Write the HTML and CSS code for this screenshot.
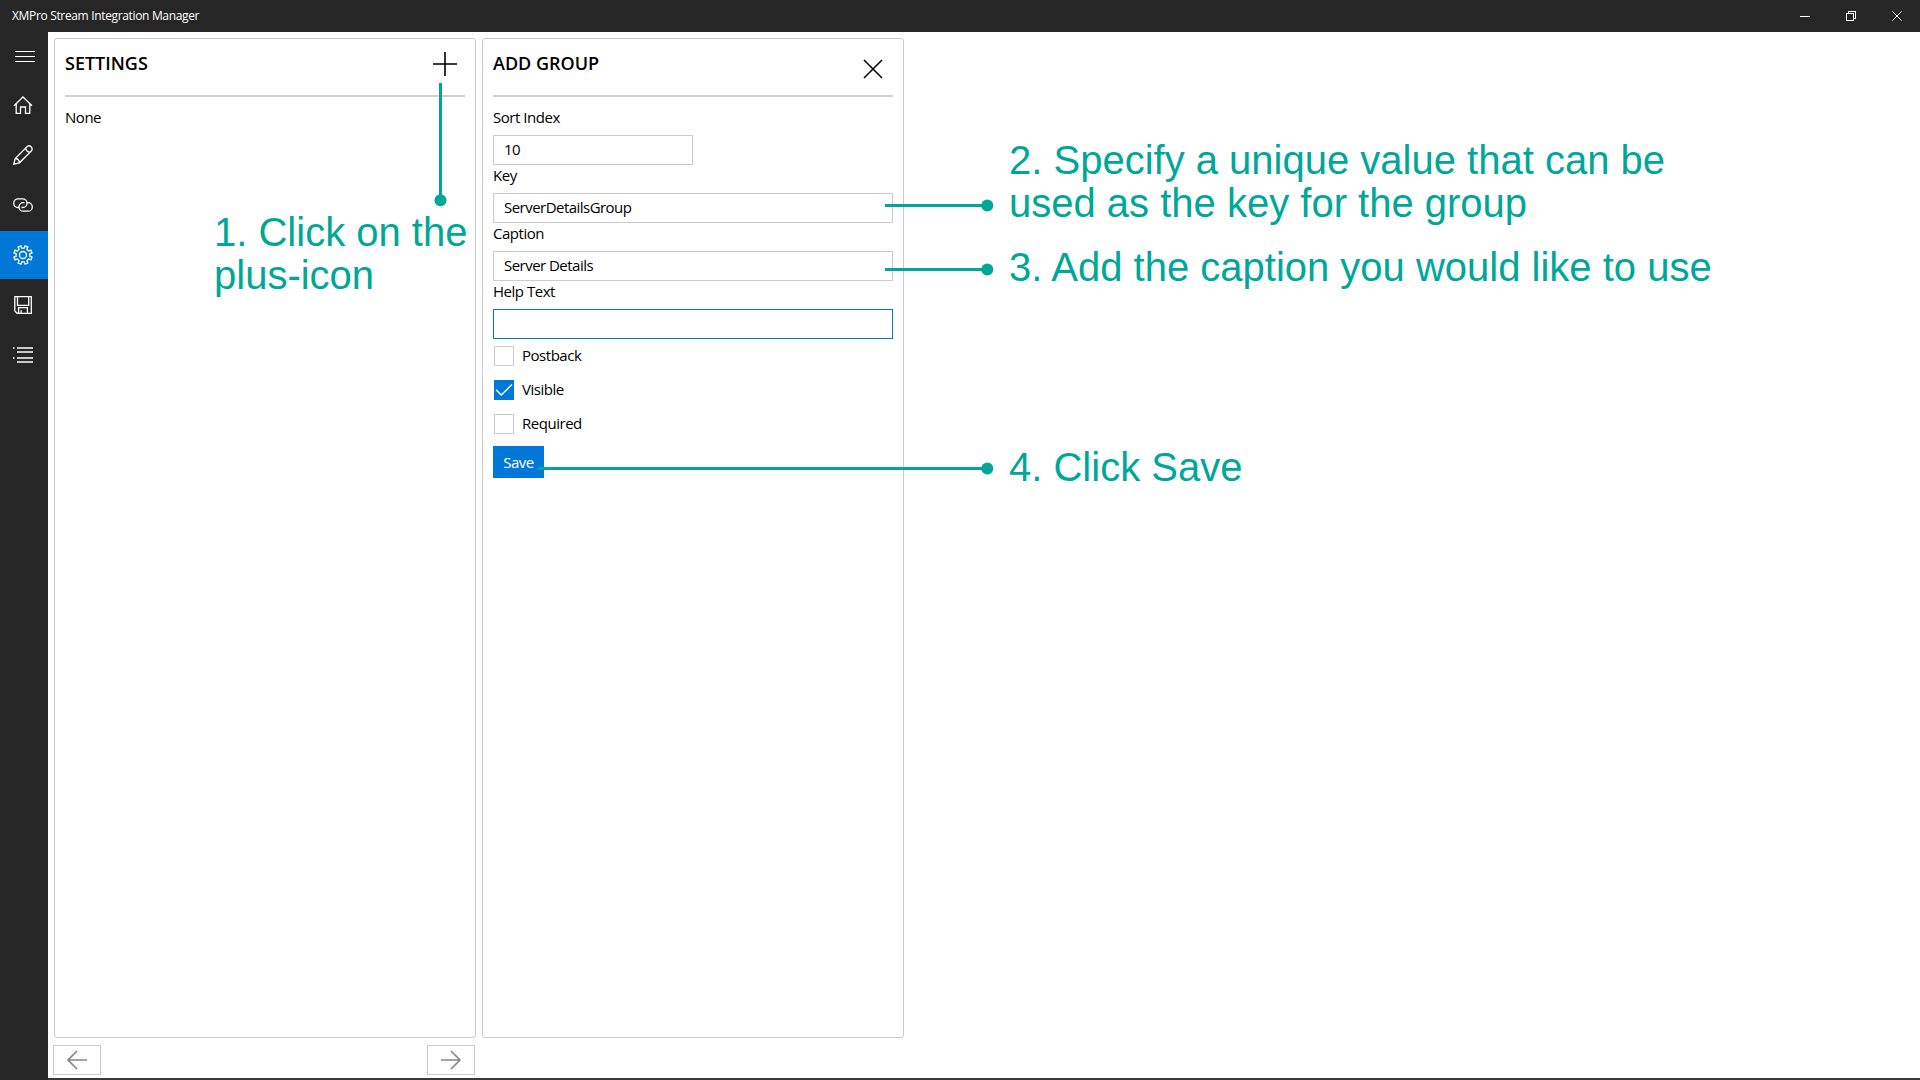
FILE: index.html
```html
<!DOCTYPE html>
<html lang="en">
<head>
<meta charset="utf-8">
<title>XMPro Stream Integration Manager</title>
<link rel="stylesheet" href="styles.css">
</head>
<body>
<div class="window">
  <header class="titlebar">
    <span class="titlebar-text">XMPro Stream Integration Manager</span>
    <div class="window-controls">
      <span class="control"><svg width="10" height="10" viewBox="0 0 10 10" shape-rendering="crispEdges"><path d="M0 5.5h10"/></svg></span>
      <span class="control"><svg width="10" height="10" viewBox="0 0 10 10" shape-rendering="crispEdges"><path d="M.5 2.5h7v7h-7zM2.5 2.5v-2h7v7h-2"/></svg></span>
      <span class="control"><svg width="10" height="10" viewBox="0 0 10 10"><path d="M.3.3l9.4 9.4M9.7.3L.3 9.7"/></svg></span>
    </div>
  </header>
  <div class="body">
    <nav class="sidebar">
      <a class="nav-item nav-menu"><svg width="20" height="12" viewBox="0 0 20 12" shape-rendering="crispEdges"><path d="M0 .5h20M0 5.5h20M0 10.5h20"/></svg></a>
      <a class="nav-item"><svg width="20" height="20" viewBox="0 0 20 20"><path d="M1 10.700L10 2l9 8.700M3.200 9v9.300h4.300v-6.300h5v6.300h4.300V9"/></svg></a>
      <a class="nav-item"><svg width="20" height="20" viewBox="0 0 20 20"><path d="M.8 19.200l1.400-5.700L14.500 1.300c2.500-1.700 5.600 1.400 4.200 4.200L6.500 17.800zM2.200 13.500c2.300 0 4.300 2 4.300 4.300M12.700 3.100c.4 2.400 1.800 3.800 4.200 4.200"/></svg></a>
      <a class="nav-item"><svg width="20" height="20" viewBox="0 0 20 20"><path d="M5.500 12.500H5A4.300 4.300 0 0 1 5 3.900h4.700a4.300 4.300 0 0 1 0 8.600H8.500M14.500 7.600h.5a4.300 4.300 0 0 1 0 8.600h-4.700a4.300 4.300 0 0 1 0-8.600h1.200"/></svg></a>
      <a class="nav-item nav-active"><svg width="20" height="20" viewBox="-10 -10 20 20"><circle r="3.500"/><path d="M-1.200-6.800L1.200-6.800 2.170-9.040 4.860-7.930 3.960-5.660 5.660-3.960 7.930-4.860 9.040-2.170 6.800-1.200 6.800 1.200 9.040 2.170 7.930 4.860 5.660 3.960 3.960 5.660 4.860 7.930 2.170 9.040 1.200 6.800-1.200 6.800-2.170 9.040-4.860 7.930-3.960 5.660-5.660 3.960-7.930 4.860-9.040 2.170-6.800 1.200-6.800-1.200-9.040-2.170-7.930-4.860-5.660-3.960-3.960-5.660-4.860-7.930-2.170-9.040z"/></svg></a>
      <a class="nav-item"><svg width="20" height="20" viewBox="0 0 20 20"><path d="M1.800 1.700h16.500v16.600H4.200l-2.400-2.400zM4.500 1.700v8.600h11.200V1.700M5.600 18.300v-5.600h8.800v5.600M8.200 18.300v-3"/></svg></a>
      <a class="nav-item"><svg width="20" height="20" viewBox="0 0 20 20"><path d="M4 3h16M4 7h16M4 13h16M4 17h16M0 3h1.500M0 13h1.500"/></svg></a>
    </nav>
    <main class="content">
      <div class="panels">
        <section class="panel">
          <div class="panel-header">
            <h1 class="panel-title">SETTINGS</h1>
            <svg class="add-icon" width="24" height="24" viewBox="0 0 24 24"><path d="M0 12h24M12 0v24"/></svg>
          </div>
          <p class="label">None</p>
        </section>
        <section class="panel">
          <div class="panel-header">
            <h1 class="panel-title">ADD GROUP</h1>
            <svg class="close-icon" width="20" height="20" viewBox="0 0 20 20"><path d="M1 1l18 18M19 1L1 19"/></svg>
          </div>
          <div class="label">Sort Index</div>
          <div class="field field-short">10</div>
          <div class="label">Key</div>
          <div class="field">ServerDetailsGroup</div>
          <div class="label">Caption</div>
          <div class="field">Server Details</div>
          <div class="label">Help Text</div>
          <div class="field field-focus"></div>
          <div class="checks">
            <div class="check"><span class="box"></span>Postback</div>
            <div class="check"><span class="box box-on"><svg width="20" height="20" viewBox="0 0 20 20"><path d="M2 9.700l5.300 5.300L18 4.500"/></svg></span>Visible</div>
            <div class="check"><span class="box"></span>Required</div>
          </div>
          <div class="save">Save</div>
        </section>
      </div>
      <footer class="pager">
        <span class="page-button"><svg width="20" height="20" viewBox="0 0 20 20"><path d="M1 10h19M10 1l-9 9 9 9"/></svg></span>
        <span class="page-button"><svg width="20" height="20" viewBox="0 0 20 20"><path d="M19 10H0M10 1l9 9-9 9"/></svg></span>
      </footer>
    </main>
  </div>
  <svg class="callout-lines" width="1920" height="1080" viewBox="0 0 1920 1080">
    <path d="M440.500 83v117M885 205.500h102M885 269.500h102M537.500 468.500H987"/>
    <circle cx="440.500" cy="200.300" r="6"/>
    <circle cx="987.300" cy="205.500" r="6"/>
    <circle cx="987.300" cy="269.500" r="6"/>
    <circle cx="987.300" cy="468.500" r="6"/>
  </svg>
  <div class="callout callout-1">1. Click on the<br>plus-icon</div>
  <div class="callout callout-2">2. Specify a unique value that can be<br>used as the key for the group</div>
  <div class="callout callout-3">3. Add the caption you would like to use</div>
  <div class="callout callout-4">4. Click Save</div>
</div>
</body>
</html>
```
FILE: styles.css
```css
* {
  box-sizing: border-box;
}

body {
  margin: 0;
  background: #fff;
  color: #000;
  font-family: "Open Sans", "Noto Sans", sans-serif;
  font-size: 15px;
  letter-spacing: -0.47px;
}

svg {
  display: block;
  fill: none;
  stroke: currentColor;
}

.window {
  position: relative;
  display: flex;
  flex-direction: column;
  width: 1920px;
  height: 1080px;
  overflow: hidden;
}

.titlebar {
  display: flex;
  justify-content: space-between;
  align-items: center;
  height: 32px;
  padding-left: 12px;
  background: #262626;
  color: #fff;
}

.titlebar-text {
  padding-bottom: 2px;
  font-size: 12px;
  letter-spacing: -0.34px;
}

.window-controls {
  display: flex;
}

.control {
  display: flex;
  justify-content: center;
  width: 46px;
}

.body {
  display: flex;
  flex: 1;
  min-height: 0;
}

.sidebar {
  display: flex;
  flex-direction: column;
  gap: 2px;
  width: 48px;
  background: #262626;
  color: #fff;
}

.nav-item {
  display: flex;
  align-items: center;
  justify-content: center;
  height: 48px;
  padding-right: 2px;
  stroke-width: 1.3;
}

.nav-menu {
  height: 47px;
  padding: 2px 0 0 2px;
  stroke-width: 1;
}

.nav-active {
  background: #0078d7;
}

.content {
  display: flex;
  flex: 1;
  flex-direction: column;
  padding: 6px 0 0 5px;
  border-bottom: 2px solid #393939;
}

.panels {
  display: flex;
  gap: 6px;
  padding-left: 1px;
  height: 1000px;
}

.panel {
  width: 422px;
  padding: 0 10px;
  border: 1px solid #ccc;
  border-radius: 3px;
}

.panel-header {
  display: flex;
  align-items: flex-start;
  justify-content: space-between;
  height: 58px;
  border-bottom: 2px solid #d2d2d2;
}

.panel-title {
  margin: 12px 0 0;
  font-size: 18px;
  line-height: 25px;
  font-weight: 600;
  letter-spacing: 0;
}

.add-icon {
  margin: 13px 8px 0 0;
  stroke-width: 1.6;
}

.close-icon {
  margin: 20px 10px 0 0;
  stroke-width: 1.5;
}

.label {
  height: 28px;
  margin: 0;
  line-height: 20px;
}

.panel-header + .label {
  height: 38px;
  padding-top: 10px;
}

.field {
  height: 30px;
  padding-left: 10px;
  border: 1px solid #ccc;
  line-height: 26px;
  letter-spacing: -0.53px;
}

.field-short {
  width: 200px;
}

.field-focus {
  border-color: #0078d7;
}

.checks {
  display: flex;
  flex-direction: column;
  gap: 14px;
  padding: 7px 0 0 1px;
}

.check {
  display: flex;
  gap: 8px;
  height: 20px;
  line-height: 18px;
}

.box {
  width: 20px;
  height: 20px;
  border: 1px solid #ccc;
}

.box-on {
  border: 0;
  background: #0078d7;
  color: #fff;
  stroke-width: 1.4;
}

.save {
  width: 51px;
  height: 32px;
  margin-top: 12px;
  background: #0078d7;
  color: #fff;
  line-height: 33px;
  text-align: center;
}

.pager {
  display: flex;
  justify-content: space-between;
  width: 422px;
  margin-top: 7px;
  color: #888;
}

.page-button {
  display: flex;
  align-items: center;
  justify-content: center;
  width: 48px;
  height: 30px;
  border: 1px solid #ccc;
  stroke-width: 1.7;
}

.callout-lines {
  position: absolute;
  left: 0;
  top: 0;
  color: #00a798;
  stroke-width: 3;
}

.callout-lines circle {
  fill: currentColor;
  stroke: none;
}

.callout {
  position: absolute;
  color: #00a798;
  font-family: "Liberation Sans", Arial, sans-serif;
  font-size: 40px;
  line-height: 43px;
  letter-spacing: 0;
  white-space: nowrap;
}

.callout-1 {
  left: 214px;
  top: 211px;
}

.callout-2 {
  left: 1009px;
  top: 139px;
}

.callout-3 {
  left: 1009px;
  top: 246px;
}

.callout-4 {
  left: 1009px;
  top: 446px;
}
```
